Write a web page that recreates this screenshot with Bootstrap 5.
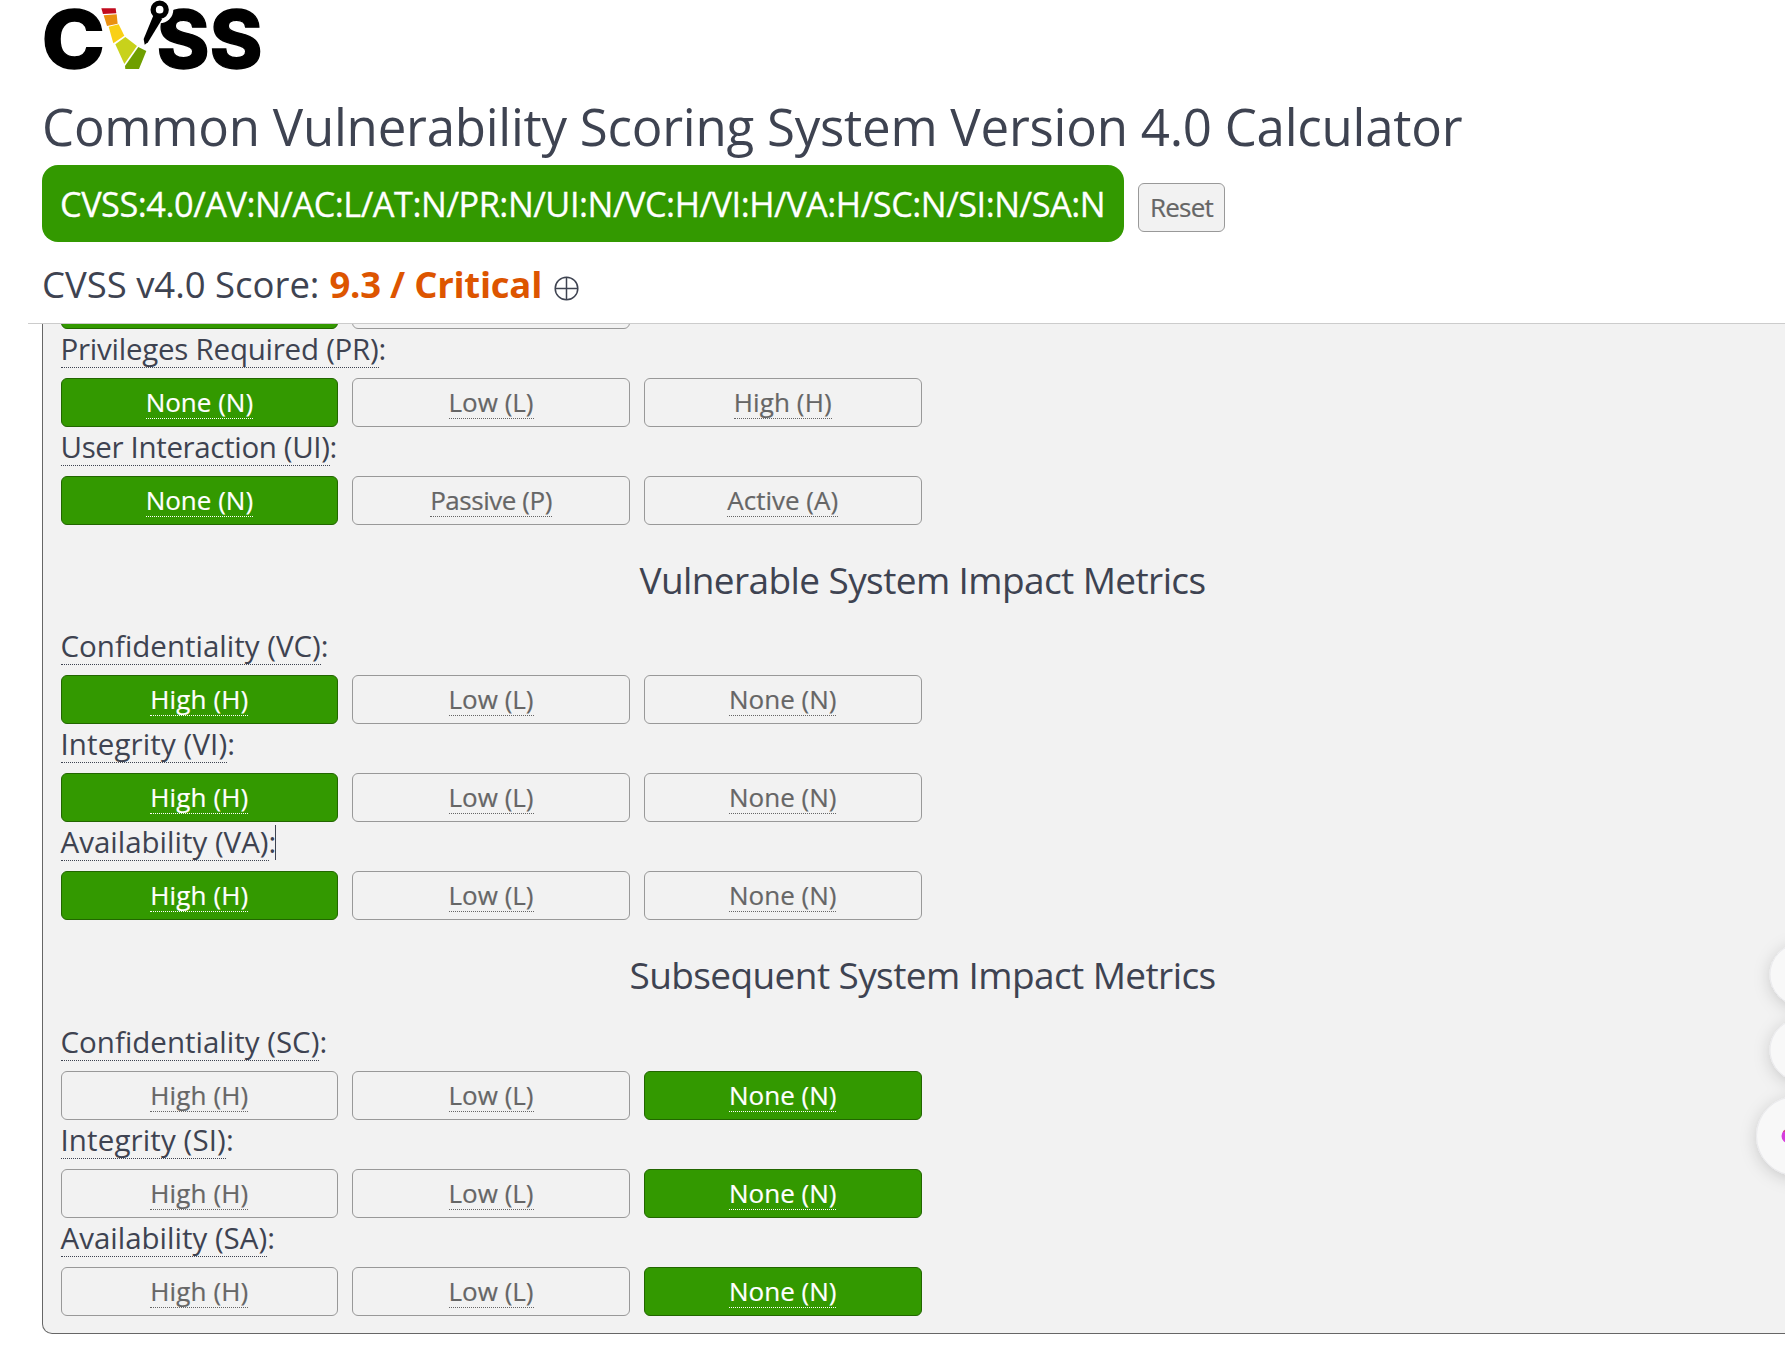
<!DOCTYPE html>
<html lang="en">
<head>
<meta charset="utf-8">
<title>Common Vulnerability Scoring System Version 4.0 Calculator</title>
<link rel="stylesheet" href="https://cdn.jsdelivr.net/npm/bootstrap@5.3.0/dist/css/bootstrap.min.css">
<style>
body { font-family: "Open Sans", "Noto Sans", sans-serif; color: #3e4351; background: #fff; height: 1353px; white-space: nowrap; }
.top-area { height: 324px; margin-left: 28px; padding-left: 14px; border-bottom: 1px solid #ccc; }
.logo { width: 250px; height: 80px; margin-left: -12px; overflow: visible; }
.page-title { font-size: 51px; line-height: 72px; letter-spacing: -.24px; height: 75px; margin-top: 10px; }
.vector-row { height: 77px; gap: 14px; }
.vector { width: 1082px; height: 77px; border-radius: 16px; padding-left: 18px; background: #390; color: #fff; font-size: 34.3px; line-height: 78px; letter-spacing: -.47px; -webkit-text-stroke: .3px #fff; }
.btn.metric-btn { height: 49px; padding: 0; border: 1px solid #999; border-radius: 6px; background: #f2f2f2; color: #666; font-size: 26px; line-height: 39px; -webkit-text-stroke: .2px currentColor; }
.btn.metric-btn.reset { width: 87px; margin-top: 18px; letter-spacing: -.8px; }
.btn.metric-btn.chosen { background: #390; border-color: #260; color: #fff; }
.score { font-size: 36.5px; line-height: 50px; letter-spacing: -.02px; margin-top: 17px; }
.score b { color: #dd5500; letter-spacing: -.25px; margin-left: 10px; }
.score svg { margin-left: 11.5px; margin-top: 8px; }
.panel-clip { height: 1029px; }
.panel { width: 1761px; height: 1010px; margin-left: 42px; padding: 0 17.5px; border: 1px solid #666; border-top: 0; border-radius: 0 0 10px 10px; background: #f2f2f2; display: flow-root; }
.scrolled { margin-top: -44px; padding-bottom: 1px; }
.metric { height: 98px; }
.metric-label { height: 48px; line-height: 38px; font-size: 29.5px; letter-spacing: 0; }
.hint { display: inline-block; line-height: 36px; border-bottom: 1px dotted currentColor; }
.choices { gap: 14px; }
.choices .metric-btn { width: 277.7px; }
.metric-btn .hint { line-height: 32px; }
.group-title { height: 101px; padding-top: 28px; margin: 0; font-size: 37px; line-height: 52px; font-weight: 400; letter-spacing: -.6px; text-align: center; }
.group-title.subsequent { height: 102px; }
.tight1 { letter-spacing: -.24px; } .tight2 { letter-spacing: -.35px; } .tight3 { letter-spacing: -.45px; }
.loose { letter-spacing: .12px; }
.caret { display: inline-block; width: 1px; height: 35px; margin-left: -1px; background: #3e4351; vertical-align: -7px; }
.bubble { position: absolute; right: 0; top: 880px; }
</style>
</head>
<body class="overflow-hidden position-relative">
<header class="top-area">
  <svg class="logo d-block" viewBox="0 0 750 240" role="img" aria-label="CVSS logo">
    <g font-family="Inter, sans-serif" font-weight="800" font-size="238" stroke="#000" stroke-width="4">
      <text x="35" y="205" textLength="189" lengthAdjust="spacingAndGlyphs">C</text>
      <text x="380" y="205" textLength="158" lengthAdjust="spacingAndGlyphs">S</text>
      <text x="539" y="205" textLength="158" lengthAdjust="spacingAndGlyphs">S</text>
    </g>
    <path d="M214 25H257L259 40 219 42Z" fill="#c10b1e"/>
    <path d="M221 46 260 43 263 71 231 78Z" fill="#ea9010"/>
    <path d="M236 80 266 73 283 107 250 130Z" fill="#f9d015"/>
    <path d="M256 133 286 111 321 138 283 192Z" fill="#c8d21b"/>
    <path d="M325 141 349 153 327 207H286L285 198Z" fill="#6f9f00"/>
    <circle cx="389" cy="29" r="41" fill="#fff"/>
    <path d="M371 44 397 56 354 127 344 134 341 117Z"/>
    <circle cx="389" cy="29" r="19.500" fill="#fff" stroke="#000" stroke-width="16"/>
  </svg>
  <h1 class="page-title mb-0 fw-normal">Common Vulnerability Scoring System Version 4.0 Calculator</h1>
  <div class="vector-row d-flex">
    <div class="vector">CVSS:4.0/AV:N/AC:L/AT:N/PR:N/UI:N/VC:H/VI:H/VA:H/SC:N/SI:N/SA:N</div>
    <button class="btn metric-btn reset">Reset</button>
  </div>
  <div class="score d-flex align-items-center">CVSS v4.0 Score:<b>9.3 / Critical</b>
    <svg width="25" height="25" viewBox="0 0 25 25" fill="none" stroke="#3e4351" stroke-width="1.500"><circle cx="12.500" cy="12.500" r="11.300"/><path d="M12.500 1V24M1 12.500H24"/></svg>
  </div>
</header>
<main class="panel-clip overflow-hidden">
  <div class="panel">
    <div class="scrolled choices d-flex"><button class="btn metric-btn chosen"></button><button class="btn metric-btn"></button></div>
    <div class="metric"><div class="metric-label tight1"><span class="hint">Privileges Required (PR)</span>:</div>
      <div class="choices d-flex"><button class="btn metric-btn chosen"><span class="hint">None (N)</span></button><button class="btn metric-btn"><span class="hint">Low (L)</span></button><button class="btn metric-btn"><span class="hint loose">High (H)</span></button></div></div>
    <div class="metric"><div class="metric-label tight2"><span class="hint">User Interaction (UI)</span>:</div>
      <div class="choices d-flex"><button class="btn metric-btn chosen"><span class="hint">None (N)</span></button><button class="btn metric-btn"><span class="hint tight3">Passive (P)</span></button><button class="btn metric-btn"><span class="hint">Active (A)</span></button></div></div>
    <h2 class="group-title">Vulnerable System Impact Metrics</h2>
    <div class="metric"><div class="metric-label"><span class="hint">Confidentiality (VC)</span>:</div>
      <div class="choices d-flex"><button class="btn metric-btn chosen"><span class="hint loose">High (H)</span></button><button class="btn metric-btn"><span class="hint">Low (L)</span></button><button class="btn metric-btn"><span class="hint">None (N)</span></button></div></div>
    <div class="metric"><div class="metric-label loose"><span class="hint">Integrity (VI)</span>:</div>
      <div class="choices d-flex"><button class="btn metric-btn chosen"><span class="hint loose">High (H)</span></button><button class="btn metric-btn"><span class="hint">Low (L)</span></button><button class="btn metric-btn"><span class="hint">None (N)</span></button></div></div>
    <div class="metric"><div class="metric-label"><span class="hint">Availability (VA)</span>:<span class="caret"></span></div>
      <div class="choices d-flex"><button class="btn metric-btn chosen"><span class="hint loose">High (H)</span></button><button class="btn metric-btn"><span class="hint">Low (L)</span></button><button class="btn metric-btn"><span class="hint">None (N)</span></button></div></div>
    <h2 class="group-title subsequent">Subsequent System Impact Metrics</h2>
    <div class="metric"><div class="metric-label"><span class="hint">Confidentiality (SC)</span>:</div>
      <div class="choices d-flex"><button class="btn metric-btn"><span class="hint loose">High (H)</span></button><button class="btn metric-btn"><span class="hint">Low (L)</span></button><button class="btn metric-btn chosen"><span class="hint">None (N)</span></button></div></div>
    <div class="metric"><div class="metric-label loose"><span class="hint">Integrity (SI)</span>:</div>
      <div class="choices d-flex"><button class="btn metric-btn"><span class="hint loose">High (H)</span></button><button class="btn metric-btn"><span class="hint">Low (L)</span></button><button class="btn metric-btn chosen"><span class="hint">None (N)</span></button></div></div>
    <div class="metric"><div class="metric-label"><span class="hint">Availability (SA)</span>:</div>
      <div class="choices d-flex"><button class="btn metric-btn"><span class="hint loose">High (H)</span></button><button class="btn metric-btn"><span class="hint">Low (L)</span></button><button class="btn metric-btn chosen"><span class="hint">None (N)</span></button></div></div>
  </div>
</main>
<svg class="bubble" width="85" height="340" viewBox="0 0 85 340">
  <defs><filter id="soft" x="-50%" y="-50%" width="200%" height="200%"><feDropShadow dx="0" dy="3" stdDeviation="8" flood-color="#000" flood-opacity=".17"/></filter></defs>
  <g fill="#f8f8f8" stroke="#ebebee" filter="url(#soft)">
    <circle cx="101" cy="94.500" r="31"/><circle cx="101" cy="170" r="31"/><circle cx="96" cy="256" r="39.500"/>
  </g>
  <circle cx="89" cy="256" r="7.500" fill="#d63ddd"/><path d="M83 251.500Q85 249 88 249V252H83Z" fill="#d84a80"/>
</svg>
<script src="https://cdn.jsdelivr.net/npm/bootstrap@5.3.0/dist/js/bootstrap.bundle.min.js"></script>
</body>
</html>
